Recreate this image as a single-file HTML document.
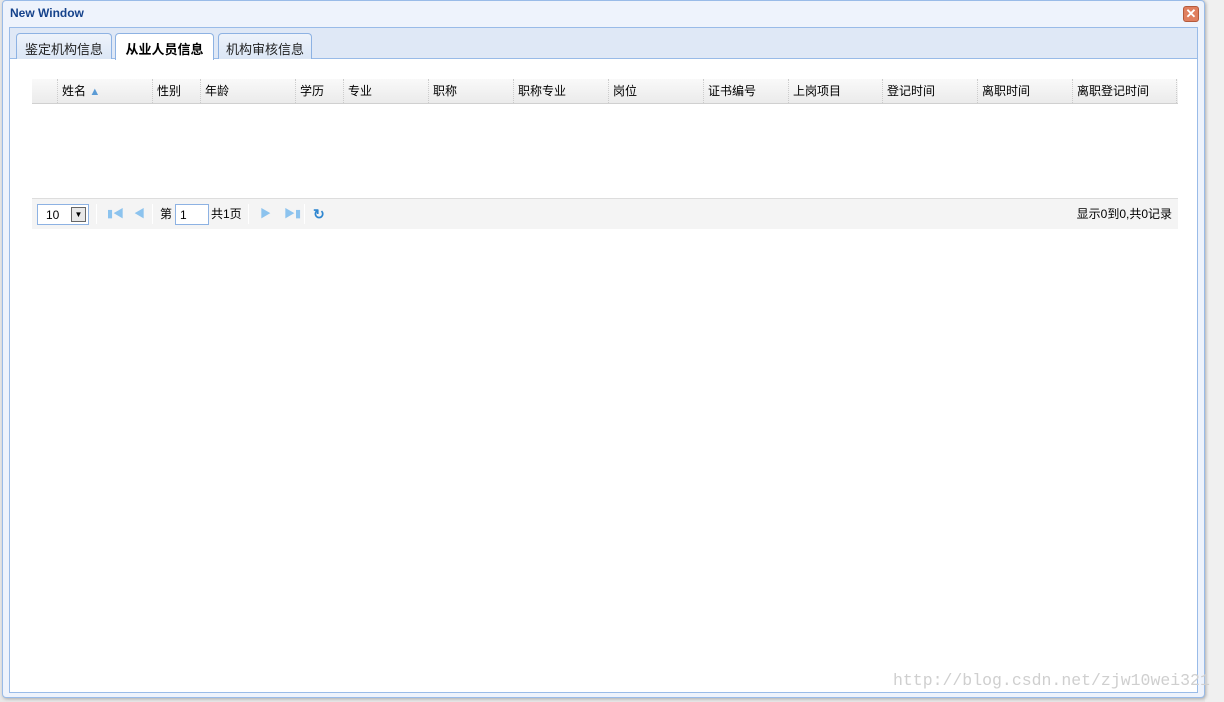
<!DOCTYPE html>
<html><head><meta charset="utf-8"><style>
*{margin:0;padding:0;box-sizing:border-box}
body{width:1224px;height:702px;overflow:hidden;background:#e8e8e8;font-family:"Liberation Sans","Noto Sans CJK SC",sans-serif;font-size:12px;color:#000;position:relative}
.side{position:absolute;left:1205px;top:0;width:19px;height:702px;background:#f0f0f0}
.win{position:absolute;left:2px;top:0;width:1203px;height:698px;background:#eef3fc;border:1px solid #99bbe8;border-radius:4px;box-shadow:1px 1px 3px #aaa}
.title{position:absolute;left:7px;top:5px;font-weight:bold;font-size:12px;color:#15428b}
.close{position:absolute;left:1180px;top:5px;width:16px;height:16px;background:#e07f5f;border:1px solid #b45a3c;border-radius:3px;color:#fff;font-size:13px;font-weight:bold;line-height:13px;text-align:center}
.panel{position:absolute;left:9px;top:27px;width:1189px;height:666px;border:1px solid #99bbe8;background:#fff}
.tabs{height:31px;background:#dfe8f6;border-bottom:1px solid #99bbe8;position:relative}
.tab{position:absolute;top:5px;height:26px;border:1px solid #8db2e3;border-bottom:none;border-radius:4px 4px 0 0;background:linear-gradient(#eef3fb,#dbe6f5);font-size:13px;padding-top:5px;text-align:center;color:#222}
.tab.on{background:#fff;height:27px;font-weight:bold;color:#000}
.grid{position:absolute;left:22px;top:51px;width:1146px}
.hd{height:25px;background:linear-gradient(#f9f9f9,#ebebeb);border-bottom:1px solid #d0d0d0;position:relative}
.c{position:absolute;top:0;height:24px;line-height:24px;padding-left:4px;border-left:1px dotted #ccc;font-size:12px}
.pager{position:absolute;left:22px;top:170px;width:1146px;height:31px;background:#f4f4f4;border-top:1px solid #ddd}
.pg{position:absolute;top:0;line-height:30px}
.sep{position:absolute;top:5px;width:1px;height:20px;background:#ccc;border-right:1px solid #fff}
.wm{position:absolute;left:893px;top:671px;font-family:"Liberation Mono",monospace;font-size:16.5px;color:#cfcfcf}
</style></head><body>
<div class="side"></div>
<div class="win">
<div class="title">New Window</div>
<div class="close">✕</div>
</div>
<div class="panel">
<div class="tabs">
<div class="tab" style="left:6px;width:96px">鉴定机构信息</div>
<div class="tab on" style="left:105px;width:99px">从业人员信息</div>
<div class="tab" style="left:208px;width:94px">机构审核信息</div>
</div>
<div class="grid"><div class="hd">
<div class="c" style="left:25px;width:95px">姓名 <span style="color:#5b9bd5;font-size:11px">▲</span></div>
<div class="c" style="left:120px">性别</div>
<div class="c" style="left:168px">年龄</div>
<div class="c" style="left:263px">学历</div>
<div class="c" style="left:311px">专业</div>
<div class="c" style="left:396px">职称</div>
<div class="c" style="left:481px">职称专业</div>
<div class="c" style="left:576px">岗位</div>
<div class="c" style="left:671px">证书编号</div>
<div class="c" style="left:756px">上岗项目</div>
<div class="c" style="left:850px">登记时间</div>
<div class="c" style="left:945px">离职时间</div>
<div class="c" style="left:1040px;width:105px;border-right:1px dotted #ccc">离职登记时间</div>
</div></div>
<div class="pager">
<div style="position:absolute;left:5px;top:5px;width:52px;height:21px;border:1px solid #8db2e3;background:#fff;padding:3px 0 0 8px">10<div style="position:absolute;right:2px;top:2px;width:15px;height:15px;border:1px solid #666;background:#e8e8e8;font-size:8px;text-align:center;line-height:14px">▼</div></div>
<div class="sep" style="left:64px"></div>
<div class="pg" style="left:75px;color:#8cc3ee;font-size:11px">▮◀</div>
<div class="pg" style="left:102px;color:#8cc3ee;font-size:11px">◀</div>
<div class="sep" style="left:120px"></div>
<div class="pg" style="left:128px">第</div>
<div style="position:absolute;left:143px;top:5px;width:34px;height:21px;border:1px solid #8db2e3;background:#fff;padding:3px 4px">1</div>
<div class="pg" style="left:179px">共1页</div>
<div class="sep" style="left:216px"></div>
<div class="pg" style="left:228px;color:#8cc3ee;font-size:11px">▶</div>
<div class="pg" style="left:252px;color:#8cc3ee;font-size:11px">▶▮</div>
<div class="sep" style="left:272px"></div>
<div class="pg" style="left:281px;color:#2e86d0;font-size:14px;font-weight:bold">↻</div>
<div class="pg" style="right:6px">显示0到0,共0记录</div>
</div>
</div>
<div class="wm">http://blog.csdn.net/zjw10wei321</div>
</body></html>
